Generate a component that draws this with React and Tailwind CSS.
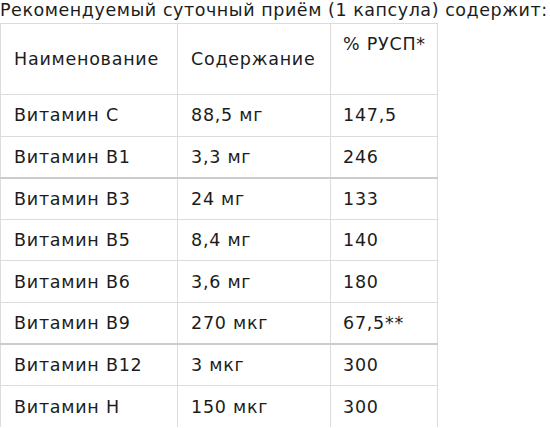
import React from 'react';

const rows = [
  { name: 'Витамин C', amount: '88,5 мг', rda: '147,5' },
  { name: 'Витамин B1', amount: '3,3 мг', rda: '246', thick: true },
  { name: 'Витамин B3', amount: '24 мг', rda: '133' },
  { name: 'Витамин B5', amount: '8,4 мг', rda: '140' },
  { name: 'Витамин B6', amount: '3,6 мг', rda: '180' },
  { name: 'Витамин B9', amount: '270 мкг', rda: '67,5**', thick: true },
  { name: 'Витамин B12', amount: '3 мкг', rda: '300' },
  { name: 'Витамин H', amount: '150 мкг', rda: '300' },
];

const App = () => {
  return (
    <div className="w-[550px] h-[428px] overflow-hidden bg-white text-[#1c1c1c] font-['DejaVu_Sans',sans-serif] text-[17.5px] tracking-[0.55px]">
      <p className="leading-[20px] mb-[3px] whitespace-nowrap">Рекомендуемый суточный приём (1 капсула) содержит:</p>
      <table className="border-collapse w-[437px] table-fixed tracking-[0.75px] whitespace-nowrap">
        <colgroup>
          <col className="w-[177px]" />
          <col className="w-[153px]" />
          <col className="w-[107px]" />
        </colgroup>
        <thead>
          <tr className="h-[71px]">
            <td className="border border-[#dcdcdc] px-[13px] align-middle">Наименование</td>
            <td className="border border-[#dcdcdc] px-[13px] align-middle">Содержание</td>
            <td className="border border-[#dcdcdc] px-[12px] pt-[7px] align-top">% РУСП*</td>
          </tr>
        </thead>
        <tbody>
          {rows.map((r) => (
            <tr key={r.name} className={r.thick ? 'h-[41.6px] border-b-2 border-[#cccccc]' : 'h-[41.6px]'}>
              <td className="border-x border-t border-[#dcdcdc] px-[13px]">{r.name}</td>
              <td className="border-x border-t border-[#dcdcdc] px-[13px]">{r.amount}</td>
              <td className="border-x border-t border-[#dcdcdc] px-[12px]">{r.rda}</td>
            </tr>
          ))}
        </tbody>
      </table>
    </div>
  );
};

export default App;
